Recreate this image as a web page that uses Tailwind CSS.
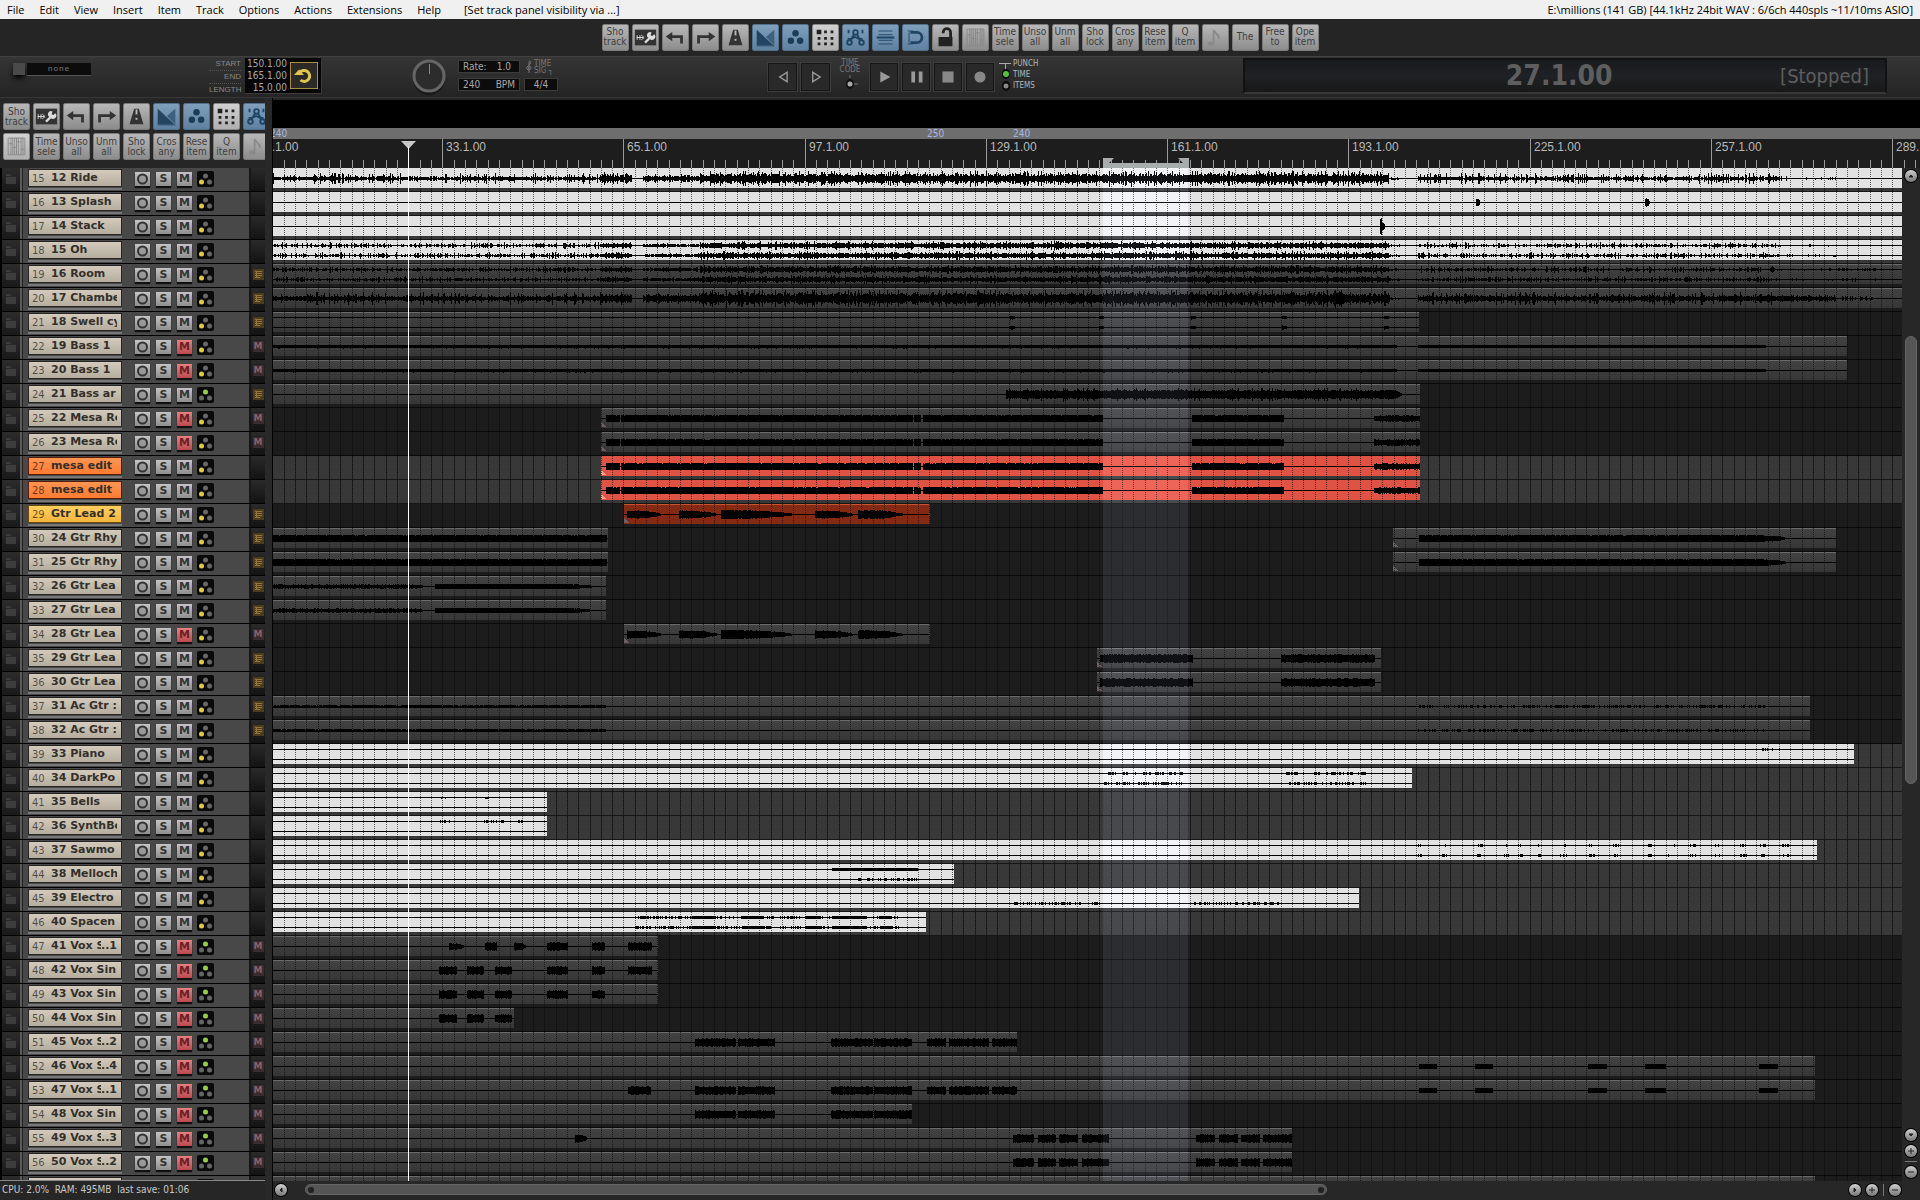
<!doctype html>
<html lang="en">
    <head>
        <meta charset="UTF-8" />
        <meta name="viewport" content="width=device-width, initial-scale=1.0" />
        <title>millions - REAPER</title>
        <script src="https://cdn.jsdelivr.net/npm/@tailwindcss/browser@4"></script>
    </head>
    <body
        class="flex flex-col h-screen overflow-hidden bg-[#262626] font-['DejaVu_Sans_Condensed','DejaVu_Sans',sans-serif] text-[#a8a8a8]"
    >
        <!-- menu -->
        <nav
            class="flex items-center h-[19px] shrink-0 bg-[#f0f0f0] text-black text-[11px] pl-[7px] pr-[7px] gap-[15px] font-['Open_Sans',sans-serif] leading-[18px] whitespace-nowrap"
        >
            <button>File</button>
            <button>Edit</button>
            <button>View</button>
            <button>Insert</button>
            <button>Item</button>
            <button>Track</button>
            <button>Options</button>
            <button>Actions</button>
            <button>Extensions</button>
            <button>Help</button>
            <span class="ml-2">[Set track panel visibility via ...]</span>
            <span class="ml-auto">E:\millions (141 GB) [44.1kHz 24bit WAV : 6/6ch 440spls ~11/10ms ASIO]</span>
        </nav>

        <!-- main toolbar -->
        <div
            id="main-toolbar"
            class="flex items-center justify-center gap-[3px] h-[37px] shrink-0 bg-[#252525] pb-px"
        ></div>

        <!-- transport -->
        <div
            class="flex items-start h-[41px] shrink-0 bg-linear-to-b from-[#353535] to-[#242424] border-t border-[#404040] pl-[13px] pr-[33px] text-[10px] leading-3"
        >
            <button class="w-3 h-3 mt-1.5 bg-[#4a4a4a] shadow-md shadow-black" aria-label="automation"></button>
            <div
                class="w-16 h-[13px] mt-1.5 ml-0.5 bg-[#0c0c0c] border-b border-[#555] text-center text-[8px] tracking-widest text-[#777] font-['Liberation_Mono',monospace]"
            >
                none
            </div>
            <div class="w-8 ml-[118px] mt-px text-right text-[8px] leading-3 text-[#888] font-['Liberation_Sans',sans-serif]">
                <p class="border-b border-dotted border-[#555]">START</p>
                <p class="border-b border-dotted border-[#555]">END</p>
                <p>LENGTH</p>
            </div>
            <div class="flex items-center justify-between w-[77px] h-9 ml-1 mt-px bg-[#060606] pl-0.5 pr-[3px] border-r border-b border-[#3a3a3a]">
                <div class="text-right">
                    <p>150.1.00</p>
                    <p>165.1.00</p>
                    <p>15.0.00</p>
                </div>
                <button class="w-7 h-[27px] shrink-0 border border-[#a88f3a] bg-[#2b2a26]" aria-label="repeat">
                    <svg viewBox="0 0 26 25" class="w-full h-full fill-none stroke-[#e2c64e]" stroke-width="3">
                        <path d="M8.500 10a5.500 5.500 0 1 1 1 7" />
                        <path d="M3 12h10l-5-5.500z" class="fill-[#e2c64e] stroke-none" />
                    </svg>
                </button>
            </div>
            <svg viewBox="0 0 38 38" class="w-[38px] h-[38px] ml-[88px]">
                <circle cx="19" cy="22" r="16" fill="#181818" />
                <circle cx="19" cy="19" r="15" fill="#2c2c2c" stroke="#666" stroke-width="3" />
                <path d="M19.500 7v10" stroke="#888" />
            </svg>
            <div class="ml-[11px] mt-1 flex flex-col gap-[7px] text-[10px] leading-[11px]">
                <div class="flex justify-between w-[60px] h-[11px] px-1 bg-[#0c0c0c] ring-1 ring-[#3c3c3c]">
                    <span>Rate:</span><span class="pr-1">1.0</span>
                </div>
                <div class="flex justify-between w-[60px] h-[11px] px-1 bg-[#0c0c0c] ring-1 ring-[#3c3c3c]">
                    <span>240</span><span>BPM</span>
                </div>
            </div>
            <div class="ml-1.5 mt-1 flex flex-col gap-[7px] leading-[11px]">
                <div class="flex gap-px h-[11px] text-[8px] leading-[7px] text-[#777] items-center">
                    <svg viewBox="0 0 8 14" class="w-2 h-3.5 fill-none stroke-[#777]">
                        <path d="M4 13V2c0-2 3-1 1 2L2 7c-2 3 4 4 4 1S3 7 3 9" />
                    </svg>
                    <div><p>TIME</p><p>SIG ┐</p></div>
                </div>
                <div class="w-8 h-[11px] text-center bg-[#0c0c0c] ring-1 ring-[#3c3c3c]">4/4</div>
            </div>
            <div id="transport-nav" class="flex gap-1 ml-[211px] mt-[6px]"></div>
            <div class="w-10 mt-0.5 flex flex-col items-center text-[8px] leading-[7px] text-[#777]">
                <p>TIME</p>
                <p>CODE</p>
                <svg viewBox="0 0 16 18" class="w-4 h-[18px]">
                    <path d="M8 2v3M12 11h4" stroke="#777" />
                    <ellipse cx="8" cy="11" rx="4" ry="5" fill="#111" />
                    <circle cx="8" cy="11" r="2.500" fill="#aaa" />
                </svg>
            </div>
            <div id="transport-play" class="flex gap-1 mt-[6px]"></div>
            <div class="flex ml-[5px] mt-px">
                <svg viewBox="0 0 14 34" class="w-3.5 h-[34px]">
                    <path d="M0 5.500h12M6.500 5v6" stroke="#aaa" fill="none" />
                    <ellipse cx="7" cy="16" rx="4" ry="5" fill="#0a0a0a" />
                    <circle cx="7" cy="16" r="3" fill="#55c13c" />
                    <ellipse cx="7" cy="28" rx="4" ry="5" fill="#0a0a0a" />
                    <circle cx="7" cy="28" r="2.500" fill="#888" />
                </svg>
                <div class="text-[8px] leading-[11px] text-[#b5b5b5]">
                    <p>PUNCH</p>
                    <p>TIME</p>
                    <p>ITEMS</p>
                </div>
            </div>
            <div
                class="grid grid-cols-3 flex-1 items-center ml-[205px] mt-px h-9 bg-linear-to-b from-[#191a1d] via-[#1f2124] to-[#181818] border-2 border-[#121212] border-b-[#383838] text-[#5e5e5e]"
            >
                <span class="col-start-2 pr-3 text-center text-[28px] font-bold leading-8">27.1.00</span>
                <span class="text-right text-xl leading-8 pr-4">[Stopped]</span>
            </div>
        </div>

        <div class="flex flex-1 min-h-0 border-t border-[#383838]">
            <!-- track control panel -->
            <aside class="flex flex-col w-[265px] shrink-0">
                <div class="h-[70px] pt-[5px] pl-[3px] shrink-0 overflow-hidden">
                    <div id="dock-top" class="flex gap-[3px]"></div>
                    <div id="dock-bottom" class="flex gap-[3px] mt-[3px]"></div>
                </div>
                <div id="tracks" class="flex-1 min-h-0 overflow-hidden border-b border-[#888]"></div>
                <div class="h-[19px] shrink-0 pl-0.5 text-[10px] leading-[18px] text-[#c8c8c8] whitespace-nowrap">
                    CPU: 2.0%&nbsp; RAM: 495MB&nbsp; last save: 01:06
                </div>
            </aside>
            <div class="w-2 shrink-0 bg-[#292929] border-r border-black"></div>

            <!-- arrange view -->
            <main class="flex flex-col flex-1 min-w-0">
                <div class="h-[30px] shrink-0 bg-black border-t-2 border-[#262626]"></div>
                <div id="tempo" class="relative h-[11px] shrink-0 bg-[#6e6e6e] overflow-hidden text-[10px] leading-[12px] text-[#a4b6e4]"></div>
                <div id="ruler" class="relative h-[29px] shrink-0 bg-[#1d1d1d] overflow-hidden text-xs leading-4 text-[#b8b8b8] font-['Liberation_Sans',sans-serif]"></div>
                <div class="flex flex-1 min-h-0">
                    <div id="lanes" class="relative flex-1 overflow-hidden isolate"></div>
                    <div id="vscroll" class="flex flex-col items-center w-[18px] shrink-0 bg-[#272727] pt-0.5"></div>
                </div>
                <div id="hscroll" class="flex items-center h-[19px] shrink-0 bg-[#272727] pl-0.5 pb-0.5"></div>
            </main>
        </div>

        <script>
            const el = (id) => document.getElementById(id)

            // ---------- toolbar buttons ----------
            const icons = {
                wrench: '<rect x="2" y="5" width="23" height="17" fill="#333"/><path d="M4.500 11v5M7.500 11v5M4 13.500h7M9 11l3 2.500-3 2.500" stroke="#ddd" fill="none"/><path d="M13 19l5-5" stroke="#ddd" stroke-width="2.500"/><path d="M17 14a3 3 0 0 1 3-6l-1 3 2 1 2-2a3.500 3.500 0 0 1-5 5z" fill="#ddd"/>',
                undo: '<path d="M8 12.500h12V20" stroke="#333" stroke-width="3" fill="none"/><path d="M3 12.500l7-5v10z" fill="#333"/>',
                redo: '<path d="M19 12.500H6V20" stroke="#333" stroke-width="3" fill="none"/><path d="M24 12.500l-7-5v10z" fill="#333"/>',
                metro: '<path d="M11 5h5l5 17H6z" fill="#333"/><path d="M13.500 6v11" stroke="#bbb" stroke-width="2"/><circle cx="13.500" cy="13" r="2" fill="#333"/>',
                xfade: '<path d="M4 5l18 17H4z" fill="#24455f"/><path d="M23 5v17L14 13z" fill="#3b617f"/><path d="M4 22.500h19" stroke="#24455f" fill="none"/>',
                group: '<g fill="#1c3d56"><circle cx="13.500" cy="9" r="3.500"/><circle cx="8.500" cy="17" r="3.500"/><circle cx="18.500" cy="17" r="3.500"/></g>',
                grid: '<path d="M4 5h5v5H4zM12 6h3v3h-3zM19 6h3v3h-3zM5 13h3v3H5zM12 13h3v3h-3zM19 13h3v3h-3zM5 19h3v3H5zM12 19h3v3h-3zM19 19h3v3h-3z" fill="#222"/>',
                env: '<g stroke="#1f4566" stroke-width="2" fill="none"><circle cx="13.500" cy="8" r="2.500"/><circle cx="7" cy="19" r="2.500"/><circle cx="20" cy="19" r="2.500"/><path d="M12 10l-4 7M15 10l4 7M5 15h4l4-2 4 2h4M6 5v4M21 5v4"/></g>',
                lines: '<path d="M6 6.500h15M6 10.500h15M6 16.500h15M6 20.500h15" stroke="#1f4566"/><path d="M4 13.500h19" stroke="#1f4566" stroke-width="2"/>',
                snap: '<path d="M8 8h7a5.500 5.500 0 0 1 0 11H8" stroke="#1f4566" stroke-width="3" fill="none"/><path d="M5 6.500h6M5 20.500h6" stroke="#1f4566"/><path d="M6.500 8v11" stroke="#1f4566"/>',
                lock: '<path d="M6 13h15v10H6z" fill="#222"/><path d="M11 9V8a4 4 0 0 1 8 0v6" stroke="#222" stroke-width="3" fill="none"/>',
                bars: '<path d="M4.500 4.500h18v18h-18zM9.500 4v18M13.500 4v18M18.500 4v18M7.500 4v18M11.500 4v18M15.500 4v18M20.500 4v18M5 10.500h4M9 14.500h4M14 8.500h4M18 16.500h4" stroke="#888" fill="none"/>',
                note: '<path d="M11.500 5v15M12 6c1 4 6 4 5 9" stroke="#8a8a8a" fill="none" stroke-width="2"/><ellipse cx="9" cy="20" rx="3.500" ry="2.500" fill="#8a8a8a"/>',
            }
            const normal = 'w-[27px] h-[27px] shrink-0 overflow-hidden bg-linear-to-b from-[#b8b8b8] to-[#8c8c8c] rounded-xs border border-[#7a7a7a] text-[#3e3e3e] text-[10px] leading-[10px] font-medium text-center'
            const active = 'w-[27px] h-[27px] shrink-0 overflow-hidden bg-linear-to-b from-[#7f9fbb] to-[#5f81a0] rounded-xs border border-[#50708c]'
            const light = 'w-[27px] h-[27px] shrink-0 overflow-hidden bg-linear-to-b from-[#d0d0d0] to-[#b0b0b0] rounded-xs border border-[#888]'
            const activeIcons = ['xfade', 'group', 'env', 'lines', 'snap']

            function toolButton(name, cls) {
                const c = cls || (activeIcons.includes(name) ? active : normal)
                const body = icons[name]
                    ? `<svg viewBox="0 0 27 27" class="w-full h-full">${icons[name]}</svg>`
                    : name.replace(' ', '<br>')
                return `<button class="${c}" aria-label="${name}">${body}</button>`
            }
            const topTools = ['Sho track', 'wrench', 'undo', 'redo', 'metro', 'xfade', 'group', 'grid', 'env']
            const textTools = ['Time sele', 'Unso all', 'Unm all', 'Sho lock', 'Cros any', 'Rese item', 'Q item', 'note']
            const draw = (list) => list.map((n) => toolButton(n, n === 'grid' ? light : '')).join('')
            el('main-toolbar').innerHTML =
                draw([...topTools, 'lines', 'snap', 'lock', 'bars', ...textTools, 'The', 'Free to', 'Ope item'])
            el('dock-top').innerHTML = draw(topTools)
            el('dock-bottom').innerHTML = toolButton('bars', light) + draw(textTools)

            const tbtn = (label, d, w) => `<button aria-label="${label}" class="${w} h-7 bg-[#292929] border border-[#161616] outline outline-[#3c3c3c]"><svg viewBox="0 0 28 28" class="w-full h-full">${d}</svg></button>`
            el('transport-nav').innerHTML =
                tbtn('previous', '<path d="M19 9v10l-8-5z" stroke="#999" stroke-width="1.500" fill="none"/>', 'w-[29px]') +
                tbtn('next', '<path d="M11 9v10l8-5z" stroke="#999" stroke-width="1.500" fill="none"/>', 'w-[29px]')
            el('transport-play').innerHTML =
                tbtn('play', '<path d="M10 8v12l11-6z" fill="#999"/>', 'w-7') +
                tbtn('pause', '<path d="M9 8h4v12H9zM17 8h4v12h-4z" fill="#999"/>', 'w-7') +
                tbtn('stop', '<path d="M8 8h12v12H8z" fill="#888"/>', 'w-7') +
                tbtn('record', '<circle cx="14" cy="14" r="6" fill="#888"/>', 'w-7')

            // ---------- track data ----------
            // item: [start, end, color, channels, segments], segment: [start, end, height, shape]
            const drums = (a) => [[273, 600, a * 0.7, 'k'], [600, 632, a * 0.8, 'f'], [632, 643, 0.5, 's'], [643, 700, a * 0.6, 'f'], [700, 1389, a, 'f'], [1389, 1400, 1, 's'], [1418, 1780, a * 0.7, 'k'], [1780, 1836, a * 0.3, 'k']]
            const mesa = [[606, 620, 3.5, 's'], [621, 913, 3.5, 's'], [914, 921, 3.5, 's'], [923, 1103, 3.5, 's'], [1192, 1284, 3.5, 's'], [1374, 1420, 3, 's']]
            const lead = [[627, 664, 4, 'd'], [679, 720, 4, 'd'], [721, 798, 4.5, 'd'], [815, 856, 4, 'd'], [858, 906, 4.5, 'd']]
            const bass = [[273, 1397, 1.8, 's'], [1418, 1766, 1.5, 's']]
            const ac = [[273, 606, 1.2, 's'], [1418, 1765, 1, 'n']]
            const voxA = [[439, 457, 4, 's'], [467, 484, 4, 's'], [495, 512, 4, 's']]
            const voxB = [[547, 568, 4, 's'], [592, 605, 4, 's']]
            const voxC = [[695, 736, 4, 's'], [738, 775, 4, 's'], [831, 873, 4, 's'], [874, 912, 4, 's']]
            const voxD = [[927, 946, 4, 's'], [949, 989, 4, 's'], [992, 1017, 4, 's']]
            const voxE = [[1419, 1437, 2.5, 's'], [1475, 1493, 2.5, 's'], [1588, 1607, 2.5, 's'], [1645, 1666, 2.5, 's'], [1759, 1778, 2.5, 's']]
            const voxF = [[1013, 1034, 4, 's'], [1038, 1056, 4, 's'], [1059, 1078, 4, 's'], [1082, 1109, 4, 's'], [1196, 1215, 4, 's'], [1219, 1238, 4, 's'], [1241, 1260, 4, 's'], [1263, 1292, 4, 's']]
            const swell = [1010, 1099, 1191, 1282, 1384].map((x) => [x, x + 6, 2, 'd'])

            // track: [name, suffix, mute, green, badge, lit lane, items]
            const tracks = [
                ['12 Ride', '', 0, 0, '', 1, [[273, 1902, 'w', 1, drums(8)]]],
                ['13 Splash', '', 0, 0, '', 1, [[273, 1902, 'w', 1, [[1476, 1480, 4, 'd'], [1645, 1650, 4, 'd']]]]],
                ['14 Stack', '', 0, 0, '', 1, [[273, 1902, 'w', 1, [[1380, 1382, 8, 's'], [1382, 1385, 4, 'd']]]]],
                ['15 Oh', '', 0, 0, '', 1, [[273, 1902, 'w', 2, drums(4.5)]]],
                ['16 Room', '', 0, 0, 'fx', 0, [[273, 1902, 'g', 2, [...drums(4.5), [1836, 1876, 2, 'k']]]]],
                ['17 Chamber', '', 0, 0, 'fx', 0, [[273, 1902, 'g', 1, [...drums(9), [273, 632, 3, 'f'], [643, 1390, 5, 'f'], [1420, 1836, 4, 'f'], [1836, 1876, 3, 'k']]]]],
                ['18 Swell cy', '', 0, 0, 'fx', 0, [[273, 1419, 'g', 2, swell]]],
                ['19 Bass 1', '', 1, 0, 'm', 0, [[273, 1847, 'g', 1, bass]]],
                ['20 Bass 1', '', 1, 0, 'm', 0, [[273, 1847, 'g', 1, bass]]],
                ['21 Bass ar', '', 0, 1, 'fx', 0, [[273, 1420, 'g', 1, [[1006, 1385, 7, 'f'], [1006, 1385, 4, 's'], [1385, 1403, 5, 'd']]]]],
                ['22 Mesa Re', '', 1, 0, 'm', 0, [[601, 1420, 'g', 1, mesa]]],
                ['23 Mesa Re', '', 1, 0, 'm', 0, [[601, 1420, 'g', 1, mesa]]],
                ['mesa edit', '', 0, 0, '', 1, [[601, 1420, 'r', 1, mesa]]],
                ['mesa edit', '', 0, 0, '', 1, [[601, 1420, 'r', 1, mesa]]],
                ['Gtr Lead 2', '', 0, 0, 'fx', 0, [[624, 930, 'b', 1, lead]]],
                ['24 Gtr Rhy', '', 0, 0, 'fx', 0, [[273, 608, 'g', 1, [[273, 607, 3.5, 's']]], [1393, 1836, 'g', 1, [[1419, 1765, 3.5, 's'], [1765, 1788, 3, 'd']]]]],
                ['25 Gtr Rhy', '', 0, 0, 'fx', 0, [[273, 608, 'g', 1, [[273, 607, 3.5, 's']]], [1393, 1836, 'g', 1, [[1419, 1765, 3.5, 's'], [1765, 1788, 3, 'd']]]]],
                ['26 Gtr Lea', '', 0, 0, 'fx', 0, [[273, 606, 'g', 1, [[273, 413, 2, 's'], [413, 425, 2, 'd'], [435, 560, 2.5, 's'], [560, 597, 2.5, 'd']]]]],
                ['27 Gtr Lea', '', 0, 0, 'fx', 0, [[273, 606, 'g', 1, [[273, 413, 2, 's'], [413, 425, 2, 'd'], [435, 560, 2.5, 's'], [560, 595, 2.5, 'd']]]]],
                ['28 Gtr Lea', '', 1, 0, 'm', 0, [[624, 930, 'g', 1, lead]]],
                ['29 Gtr Lea', '', 0, 0, 'fx', 0, [[1097, 1381, 'g', 1, [[1100, 1193, 4, 's'], [1281, 1375, 4, 's']]]]],
                ['30 Gtr Lea', '', 0, 0, 'fx', 0, [[1097, 1381, 'g', 1, [[1100, 1193, 4, 's'], [1281, 1375, 4, 's']]]]],
                ['31 Ac Gtr :', '', 0, 0, 'fx', 0, [[273, 1810, 'g', 1, ac]]],
                ['32 Ac Gtr :', '', 0, 0, 'fx', 0, [[273, 1810, 'g', 1, ac]]],
                ['33 Piano', '', 0, 0, '', 1, [[273, 1854, 'w', 2, [[1760, 1780, 1, 'n', 0]]]]],
                ['34 DarkPo', '', 0, 0, '', 1, [[273, 1412, 'w', 2, [[1101, 1184, 1, 'n'], [1286, 1366, 1, 'n']]]]],
                ['35 Bells', '', 0, 0, '', 1, [[273, 547, 'w', 2, [[440, 448, 0.5, 'n', 0], [484, 490, 0.5, 'n', 0], [518, 524, 0.5, 'n', 0]]]]],
                ['36 SynthBe', '', 0, 0, '', 1, [[273, 547, 'w', 2, [[440, 450, 1, 'n', 0], [484, 504, 1, 'n', 0], [515, 525, 1, 'n', 0]]]]],
                ['37 Sawmo', '', 0, 0, '', 1, [[273, 1817, 'w', 2, [1418, 1440, 1476, 1502, 1516, 1535, 1560, 1588, 1612, 1645, 1668, 1690, 1715, 1740, 1759, 1782].map((x) => [x, x + 7, 0.6, 'n'])]]],
                ['38 Melloch', '', 0, 0, '', 1, [[273, 954, 'w', 2, [[832, 918, 1.5, 's', 0], [858, 918, 1, 'n', 1]]]]],
                ['39 Electro', '', 0, 0, '', 1, [[273, 1359, 'w', 2, [[1010, 1100, 1, 'n', 1], [1193, 1280, 1, 'n', 1]]]]],
                ['40 Spacen', '', 0, 0, '', 1, [[273, 926, 'w', 2, [[635, 900, 1.2, 'n'], [692, 716, 1.5, 's'], [743, 764, 1.5, 's'], [805, 821, 1.5, 's'], [832, 867, 1.5, 's'], [880, 892, 1.5, 's']]]]],
                ['41 Vox S', '..1', 1, 1, 'm', 0, [[273, 658, 'g', 1, [[449, 465, 3.5, 'd'], [485, 497, 4, 's'], [514, 527, 4, 'd'], ...voxB, [628, 652, 4, 's']]]]],
                ['42 Vox Sin', '', 1, 1, 'm', 0, [[273, 658, 'g', 1, [...voxA, ...voxB, [628, 652, 4, 's']]]]],
                ['43 Vox Sin', '', 1, 1, 'm', 0, [[273, 658, 'g', 1, [...voxA, ...voxB]]]],
                ['44 Vox Sin', '', 1, 1, 'm', 0, [[273, 514, 'g', 1, voxA]]],
                ['45 Vox S', '..2', 1, 1, 'm', 0, [[273, 1017, 'g', 1, [...voxC, ...voxD]]]],
                ['46 Vox S', '..4', 1, 1, 'm', 0, [[273, 1815, 'g', 1, voxE]]],
                ['47 Vox S', '..1', 1, 1, 'm', 0, [[273, 1815, 'g', 1, [[628, 651, 4, 's'], ...voxC, ...voxD, ...voxE]]]],
                ['48 Vox Sin', '', 1, 1, 'm', 0, [[273, 912, 'g', 1, voxC]]],
                ['49 Vox S', '..3', 1, 1, 'm', 0, [[273, 1292, 'g', 1, [[575, 588, 4, 'd'], ...voxF]]]],
                ['50 Vox S', '..2', 1, 1, 'm', 0, [[273, 1292, 'g', 1, voxF]]],
                ['51 Vox S', '', 1, 1, 'm', 0, [[273, 1815, 'g', 1, []]]],
            ]

            // ---------- track panels ----------
            const plate = 'flex items-center w-[94px] h-[18px] shrink-0 bg-linear-to-b from-[#d3cabb] to-[#b5ae9f] border border-[#252525] overflow-hidden'
            const plateOrange = 'flex items-center w-[94px] h-[18px] shrink-0 bg-linear-to-b from-[#ff9550] to-[#ff7a30] border border-[#5a1c08] overflow-hidden'
            const plateYellow = 'flex items-center w-[94px] h-[18px] shrink-0 bg-linear-to-b from-[#ffd060] to-[#f5b53c] border border-[#6a4a08] overflow-hidden'
            const key = 'w-[15px] h-[14px] bg-linear-to-b from-[#c4c4c4] to-[#8e8e8e] text-[#333] text-[11px] leading-[14px] font-bold text-center shadow-[0_2px_1px_#111]'
            const keyRed = 'w-[15px] h-[14px] bg-linear-to-b from-[#e88080] to-[#b94b50] text-[#6a2024] text-[11px] leading-[14px] font-bold text-center shadow-[0_2px_1px_#111]'

            el('tracks').innerHTML = tracks.map((t, i) => {
                const [name, suffix, mute, green, badge] = t
                const p = name === 'mesa edit' ? plateOrange : name === 'Gtr Lead 2' ? plateYellow : plate
                const b = badge === 'fx'
                    ? '<svg viewBox="0 0 11 11" class="w-[11px] h-[11px] mx-auto mt-[5px]"><rect width="11" height="11" fill="#4f3c1c"/><path d="M2 2.500h7M2 4.500h7M2 6.500h7M2 8.500h5M3.500 2v7" stroke="#93763c"/></svg>'
                    : badge === 'm'
                      ? '<div class="w-[11px] h-[11px] bg-[#3c2a2f] text-[#86606a] text-[9px] leading-[11px] font-bold text-center mx-auto mt-[5px]">M</div>'
                      : ''
                return `<div class="flex h-6 border-b border-black bg-[#484848] font-['DejaVu_Sans',sans-serif]">
                    <div class="w-5 shrink-0 bg-linear-to-b from-[#2c2c2c] to-[#191919] border-l-2 border-black">
                        <svg viewBox="0 0 18 23" class="w-[18px] h-[23px]"><path d="M4 6h4l1 2h5v8H4z" fill="#3d3d3d"/><path d="M4 8.500h10" stroke="#2a2a2a"/></svg>
                    </div>
                    <div class="w-[3px] shrink-0 bg-[#5a5a5a] border-r border-[#222]"></div>
                    <div class="w-[100px] shrink-0 pl-[5px] pt-px">
                        <div class="${p}">
                            <span class="w-[22px] shrink-0 pl-[3px] text-[10px] text-black/60">${i + 15}</span>
                            <span class="flex-1 min-w-0 overflow-hidden whitespace-nowrap text-[11px] leading-4 font-bold text-[#33302b]">${name}</span>
                            <span class="text-[11px] font-bold text-[#33302b] pr-1">${suffix}</span>
                        </div>
                        <div class="w-[94px] h-0.5 mt-px bg-[#777]"></div>
                    </div>
                    <div class="flex gap-1.5 flex-1 pl-3 pt-1">
                        <button class="${key}" aria-label="record arm"><svg viewBox="0 0 15 14" class="w-full h-full"><circle cx="7.500" cy="7" r="4.500" fill="#999" stroke="#333" stroke-width="2"/></svg></button>
                        <button class="${key}">S</button>
                        <button class="${mute ? keyRed : key}">M</button>
                        <svg viewBox="0 0 17 16" class="w-[17px] h-4 -ml-px -mt-px">
                            <rect width="17" height="16" rx="2" fill="#0a0a0a"/>
                            <circle cx="8.500" cy="5" r="2.500" fill="${green ? '#8fd23c' : '#666'}"/>
                            <circle cx="4.500" cy="11" r="2.500" fill="${green ? '#666' : '#e0c848'}"/>
                            <circle cx="12.500" cy="11" r="2.500" fill="#666"/>
                        </svg>
                    </div>
                    <div class="w-4 shrink-0 bg-linear-to-b from-[#2a2a2a] to-[#131313] border-l-2 border-[#161616]">${b}</div>
                </div>`
            }).join('')

            // ---------- waveforms ----------
            let seed = 7
            function rnd() {
                seed = (seed * 16807) % 2147483647
                return seed / 2147483647
            }
            function wave(seg, off, cy) {
                const [x0, x1, amp, shape] = seg
                let d = ''
                for (let x = x0; x < x1; x++) {
                    const t = (x - x0) / (x1 - x0)
                    let a = amp
                    if (shape === 's') a = amp * (0.85 + rnd() * 0.25)
                    if (shape === 'f') a = amp * (rnd() < 0.2 ? 0.6 + rnd() * 0.4 : 0.3 + rnd() * 0.35)
                    if (shape === 'k') a = amp * (rnd() < 0.25 ? 0.4 + rnd() * 0.6 : 0.15 + rnd() * 0.25)
                    if (shape === 'd') a = amp * (1 - t * t * t) * (0.85 + rnd() * 0.2)
                    if (shape === 'n') a = rnd() < 0.4 ? amp + 0.5 : 0
                    if (a > 0) d += `M${x - off} ${(cy - a).toFixed(1)}h1v${(a * 2).toFixed(1)}h-1z`
                }
                return d
            }

            // ---------- grid ----------
            const left = 273
            const barX = (bar) => Math.round(261 + (bar - 1) * 5.664) - left
            let grid = ''
            let fine = ''
            let ticks = ''
            let labels = ''
            for (let bar = 1; bar < 296; bar += 2) {
                const x = barX(bar)
                grid += `M${x}.5 0V1020`
                fine += `M${x}.5 0V24`
                ticks += (bar - 1) % 32 === 0 ? `M${x}.5 0V29` : `M${x}.5 21V29`
            }
            for (let bar = 1; bar < 296; bar += 32) {
                labels += `<span class="absolute top-0" style="left:${barX(bar) + 4}px">${bar}.1.00</span>`
            }

            // ---------- lanes ----------
            const itemColors = {
                w: 'absolute top-0 h-5 bg-[#e2e2e2]',
                g: 'absolute top-0 h-5 bg-linear-to-b from-[#424242] to-[#363636] border-t border-[#6a6a6a]',
                r: 'absolute top-0 h-5 bg-[#de5343]',
                b: 'absolute top-0 h-5 bg-[#842a12] border-t border-[#c8552f]',
            }
            let lanes = ''
            tracks.forEach((t) => {
                const items = t[6].map(([x0, x1, color, ch, segs]) => {
                    const w = x1 - x0
                    const top = color === 'g' || color === 'b' ? 1 : 0
                    const mids = (ch === 2 ? [5.5, 15.5] : [10.5]).map((m) => m - top)
                    const d = mids.map((m, c) => `M0 ${m - 0.5}h${w}v1h-${w}z` + segs.filter((s) => s[4] === undefined || s[4] === c).map((s) => wave(s, x0, m)).join('')).join('')
                    const fade = x0 > left ? `<path d="M0 ${19 - top}v-5l5 5z" fill="${color === 'r' ? '#f7a080' : '#6d6060'}"/>` : ''
                    return `<div class="${itemColors[color]}" style="left:${x0 - left}px;width:${w}px"><svg class="block w-full h-full" shape-rendering="crispEdges"><path d="${d}"/>${fade}</svg></div>`
                }).join('')
                lanes += t[5]
                    ? `<div class="relative h-6 bg-[#383838] border-b border-[#161616]"><svg class="absolute inset-0 w-full h-full"><path d="${fine}" stroke="#262626"/></svg>${items}</div>`
                    : `<div class="relative h-6 bg-[#1c1c1c] border-b border-[#0a0a0a]">${items}</div>`
            })
            el('lanes').innerHTML = lanes + `
                <svg class="absolute inset-0 w-full h-full pointer-events-none"><path d="${grid}" stroke="#000" stroke-opacity=".6" stroke-dasharray="1 1"/></svg>
                <div class="absolute inset-y-0 left-[830px] w-[85px] bg-[#0f1115] mix-blend-plus-lighter"></div>
                <div class="absolute inset-y-0 left-[135px] w-px bg-white"></div>`
            el('ruler').innerHTML = `
                <svg class="absolute inset-0 w-full h-full"><path d="${ticks}" stroke="#999"/>
                    <path d="M830 19h11l-5 5h74l-5-5h11v10h-86z" fill="#a8acac"/>
                    <path d="M128 2h15l-7.500 8z" fill="#c8c8c8"/><path d="M135.500 8v21" stroke="#fff"/></svg>${labels}`
            el('tempo').innerHTML = [[-3, 240], [654, 250], [740, 240]]
                .map(([x, v]) => `<span class="absolute top-0" style="left:${x}px">${v}</span>`).join('')

            // ---------- scrollbars ----------
            const round = (label, d) => `<button aria-label="${label}" class="w-3 h-3 shrink-0 rounded-full bg-linear-to-b from-[#d0d0d0] to-[#777] ring-1 ring-black"><svg viewBox="0 0 12 12" class="w-full h-full"><path d="${d}" fill="#222" stroke="#222"/></svg></button>`
            const plus = 'M3 6h6M6 3v6'
            const minus = 'M3 6h6'
            el('vscroll').innerHTML =
                round('scroll up', 'M4 7h4l-2-2z') +
                '<div class="flex-1 flex flex-col w-3"><div class="grow-154"></div><div class="grow-447 rounded-md bg-[#555] border border-[#666]"></div><div class="grow-345"></div></div>' +
                `<div class="flex flex-col items-center gap-1 pb-[3px]">${round('scroll down', 'M4 5h4l-2 2z')}${round('zoom in', plus)}<div class="w-3 h-px bg-[#777]"></div>${round('zoom out', minus)}</div>`
            el('hscroll').innerHTML =
                round('scroll left', 'M7 4v4l-2-2z') +
                '<div class="flex-1 flex h-[11px]"><div class="grow-18"></div><div class="grow-1021 flex justify-between items-center px-0.5 rounded-md bg-[#555] border border-[#666]"><i class="w-1.5 h-1.5 rounded-full bg-[#222]"></i><i class="w-1.5 h-1.5 rounded-full bg-[#222]"></i></div><div class="grow-530"></div></div>' +
                `<div class="flex items-center gap-[5px] pr-[19px]">${round('scroll right', 'M5 4v4l2-2z')}${round('zoom in', plus)}<div class="w-px h-3 bg-[#777]"></div>${round('zoom out', minus)}</div>`
        </script>
    </body>
</html>
